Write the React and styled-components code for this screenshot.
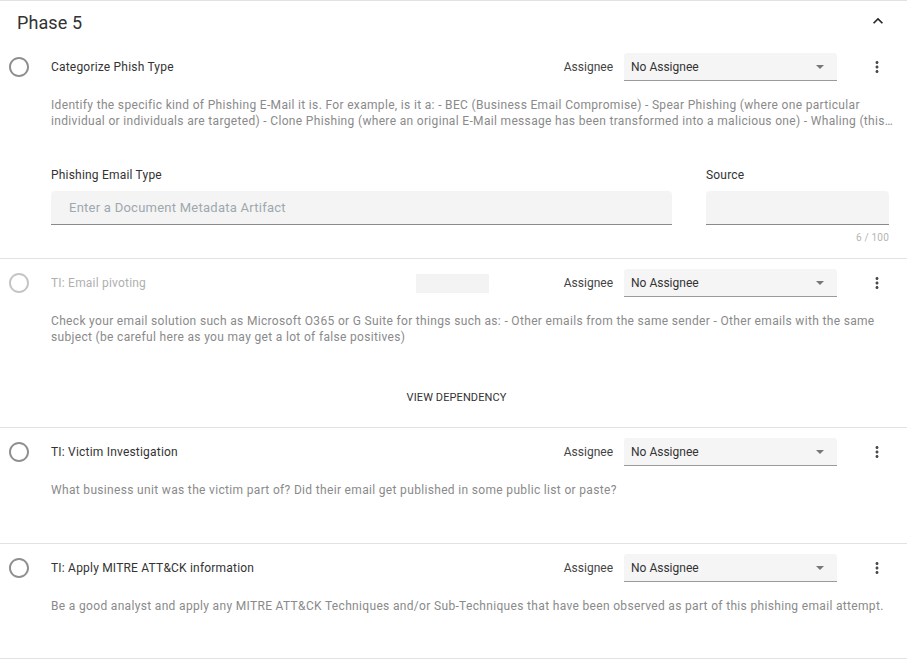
import React from 'react'
import styled, { createGlobalStyle } from 'styled-components'

const GlobalStyle = createGlobalStyle`
  body {
    margin: 0;
    background: #fff;
    font-family: Roboto, "Noto Sans", "Liberation Sans", sans-serif;
    color: #333;
  }
`

const tasks = [
  {
    id: 1,
    title: 'Categorize Phish Type',
    description:
      'Identify the specific kind of Phishing E-Mail it is. For example, is it a: - BEC (Business Email Compromise) - Spear Phishing (where one particular individual or individuals are targeted) - Clone Phishing (where an original E-Mail message has been transformed into a malicious one) - Whaling (this is when high-profile targets such as executives are attacked) - Vishing and Smishing',
    clamp: true,
    fields: true,
    bottom: 14,
  },
  {
    id: 2,
    title: 'TI: Email pivoting',
    description:
      'Check your email solution such as Microsoft O365 or G Suite for things such as: - Other emails from the same sender - Other emails with the same subject (be careful here as you may get a lot of false positives)',
    disabled: true,
    dependency: true,
    bottom: 12,
  },
  {
    id: 3,
    title: 'TI: Victim Investigation',
    description:
      'What business unit was the victim part of? Did their email get published in some public list or paste?',
    bottom: 45,
  },
  {
    id: 4,
    title: 'TI: Apply MITRE ATT&CK information',
    description:
      'Be a good analyst and apply any MITRE ATT&CK Techniques and/or Sub-Techniques that have been observed as part of this phishing email attempt.',
    bottom: 44,
  },
]

const RadioIcon = ({ faded }) => (
  <svg width="24" height="24" viewBox="0 0 24 24" fill={faded ? '#c4c4c4' : '#8f8f8f'}>
    <path d="M12 2C6.48 2 2 6.48 2 12s4.48 10 10 10 10-4.48 10-10S17.52 2 12 2zm0 18c-4.42 0-8-3.58-8-8s3.58-8 8-8 8 3.58 8 8-3.58 8-8 8z" />
  </svg>
)

const MoreIcon = () => (
  <svg width="18" height="18" viewBox="0 0 24 24" fill="#4a4a4a">
    <path d="M12 8c1.1 0 2-.9 2-2s-.9-2-2-2-2 .9-2 2 .9 2 2 2zm0 2c-1.1 0-2 .9-2 2s.9 2 2 2 2-.9 2-2-.9-2-2-2zm0 6c-1.1 0-2 .9-2 2s.9 2 2 2 2-.9 2-2-.9-2-2-2z" />
  </svg>
)

const ChevronUp = () => (
  <svg width="20" height="20" viewBox="0 0 24 24" fill="#222">
    <path d="M12 8l-6 6 1.41 1.41L12 10.83l4.59 4.58L18 14z" />
  </svg>
)

const Task = ({ task }) => (
  <Row bottom={task.bottom}>
    <Header>
      <RadioBox>
        <RadioIcon faded={task.disabled} />
      </RadioBox>
      <Title faded={task.disabled}>{task.title}</Title>
      {task.disabled && <Skeleton />}
      <Spacer />
      <AssigneeLabel>Assignee</AssigneeLabel>
      <Select>
        <span>No Assignee</span>
        <Caret />
      </Select>
      <IconButton>
        <MoreIcon />
      </IconButton>
    </Header>
    <Description clamp={task.clamp}>{task.description}</Description>
    {task.fields && (
      <Fields>
        <Field>
          <FieldLabel>Phishing Email Type</FieldLabel>
          <Input placeholder="Enter a Document Metadata Artifact" />
        </Field>
        <Field>
          <FieldLabel>Source</FieldLabel>
          <Input />
          <Counter>6 / 100</Counter>
        </Field>
      </Fields>
    )}
    {task.dependency && <DependencyButton>View dependency</DependencyButton>}
  </Row>
)

const App = () => (
  <>
    <GlobalStyle />
    <Phase>
      <PhaseHeader>
        <PhaseTitle>Phase 5</PhaseTitle>
        <ChevronUp />
      </PhaseHeader>
      {tasks.map((task) => (
        <Task key={task.id} task={task} />
      ))}
    </Phase>
  </>
)

export default App

const Phase = styled.section`
  width: 907px;
  border-top: 1px solid #e2e2e2;
`

const PhaseHeader = styled.div`
  height: 42px;
  display: flex;
  align-items: center;
  justify-content: space-between;
  padding: 0 19px 0 17px;
  svg {
    margin-top: -2px;
  }
`

const PhaseTitle = styled.h2`
  margin: 0;
  font-size: 18px;
  font-weight: 400;
  letter-spacing: 0.1px;
  color: #333;
`

const Row = styled.div`
  padding: 10px 0 ${(p) => p.bottom}px 0;
  border-bottom: 1px solid #e2e2e2;
`

const Header = styled.div`
  display: flex;
  align-items: center;
  height: 28px;
  padding: 0 18px 0 7px;
`

const RadioBox = styled.div`
  width: 24px;
  height: 24px;
  display: flex;
`

const Title = styled.div`
  width: 365px;
  margin-left: 20px;
  font-size: 12px;
  letter-spacing: 0.2px;
  color: ${(p) => (p.faded ? '#b0b0b0' : '#333')};
`

const Skeleton = styled.div`
  width: 73px;
  height: 19px;
  background: #f3f3f3;
`

const Spacer = styled.div`
  flex: 1;
`

const AssigneeLabel = styled.span`
  font-size: 12px;
  color: #444;
  margin-right: 11px;
`

const Select = styled.div`
  width: 213px;
  height: 28px;
  box-sizing: border-box;
  display: flex;
  align-items: center;
  justify-content: space-between;
  padding: 0 13px 0 7px;
  background: #f5f5f5;
  border-bottom: 1px solid #9a9a9a;
  border-radius: 3px 3px 0 0;
  font-size: 12px;
  color: #333;
`

const Caret = styled.span`
  width: 0;
  height: 0;
  border-left: 4px solid transparent;
  border-right: 4px solid transparent;
  border-top: 4px solid #777;
`

const IconButton = styled.div`
  width: 24px;
  height: 24px;
  margin-left: 28px;
  display: flex;
  align-items: center;
  justify-content: center;
`

const Description = styled.p`
  margin: 16px 12px 0 51px;
  font-size: 12px;
  line-height: 16px;
  letter-spacing: 0.33px;
  color: #8a8a8a;
  ${(p) =>
    p.clamp &&
    `
    display: -webkit-box;
    -webkit-line-clamp: 2;
    -webkit-box-orient: vertical;
    overflow: hidden;
  `}
`

const Fields = styled.div`
  display: grid;
  grid-template-columns: 1fr 183px;
  column-gap: 34px;
  margin: 38px 18px 0 51px;
`

const Field = styled.div`
  display: flex;
  flex-direction: column;
`

const FieldLabel = styled.label`
  font-size: 12px;
  line-height: 16px;
  letter-spacing: 0.2px;
  color: #333;
  margin-bottom: 8px;
`

const Input = styled.input`
  height: 34px;
  box-sizing: border-box;
  border: none;
  border-bottom: 1px solid #8a8a8a;
  border-radius: 4px 4px 0 0;
  background: #f4f4f4;
  padding: 0 18px;
  font-family: inherit;
  font-size: 13px;
  letter-spacing: 0.25px;
  outline: none;
  &::placeholder {
    color: #9ea8ae;
  }
`

const Counter = styled.div`
  margin-top: 7px;
  align-self: flex-end;
  font-size: 10px;
  line-height: 12px;
  letter-spacing: 0.2px;
  color: #b5b5b5;
`

const DependencyButton = styled.div`
  margin-top: 34px;
  height: 36px;
  display: flex;
  align-items: center;
  justify-content: center;
  padding-left: 6px;
  font-size: 11px;
  text-transform: uppercase;
  letter-spacing: 0.1px;
  color: #333;
`
